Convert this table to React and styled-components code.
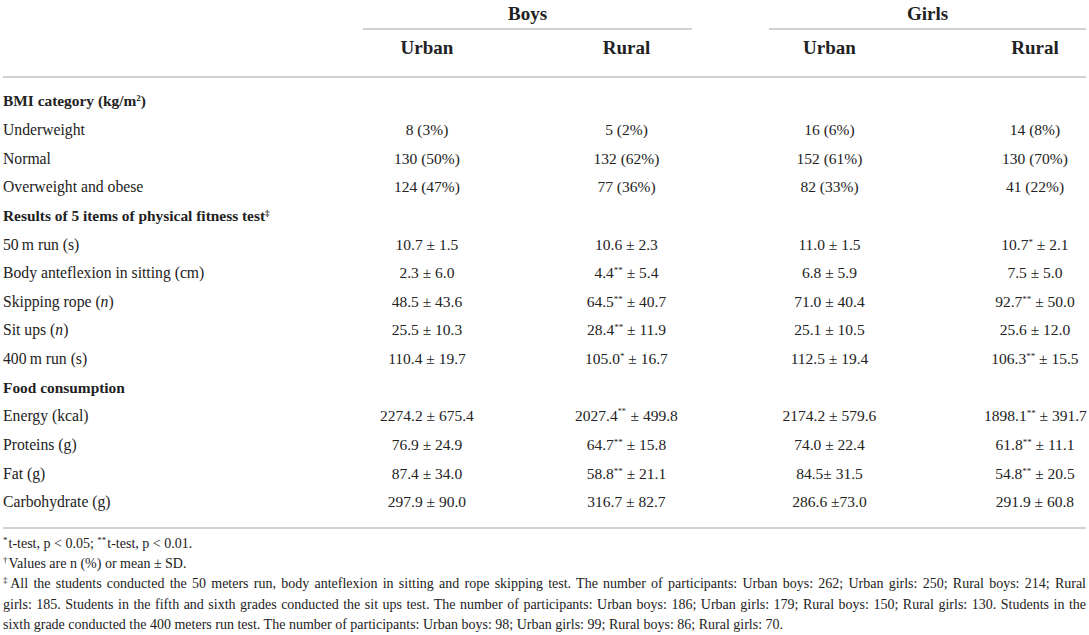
import React from 'react'
import styled, { createGlobalStyle } from 'styled-components'

const GlobalStyle = createGlobalStyle`
   html, body {
      margin: 0;
      padding: 0;
      background: #fff;
   }
   body {
      font-family: 'Liberation Serif', 'Times New Roman', serif;
      color: #222;
   }
`

const COLUMNS = '360px 128px 70px 131px 77px 121px 94px 102px'
const RULE = '2px solid #d2d2d2'

const Page = styled.div`
   width: 1083px;
   padding-left: 3px;
`

const Row = styled.div`
   display: grid;
   grid-template-columns: ${COLUMNS};
   align-items: center;
   height: ${p => p.height || 28.65}px;
   border-bottom: ${p => (p.ruled ? RULE : 'none')};
   box-sizing: border-box;
`

const GroupTitle = styled.div`
   grid-column: ${p => p.span};
   align-self: stretch;
   display: flex;
   align-items: center;
   justify-content: center;
   border-bottom: ${RULE};
   font-weight: bold;
   font-size: 19px;
   padding-bottom: 1px;
`

const SubTitle = styled.div`
   grid-column: ${p => p.col};
   text-align: center;
   font-weight: bold;
   font-size: 19px;
   align-self: start;
   padding-top: 7px;
`

const Body = styled.div`
   padding-top: 9px;
   padding-bottom: 10px;
   border-bottom: ${RULE};
`

const Label = styled.div`
   grid-column: 1;
   font-size: ${p => (p.section ? '15.4px' : '15.7px')};
   font-weight: ${p => (p.section ? 'bold' : 'normal')};
   white-space: nowrap;
`

const Value = styled.div`
   grid-column: ${p => p.col};
   text-align: center;
   font-size: 15.5px;
   white-space: nowrap;
`

const Sup = styled.sup`
   font-size: ${p => (p.tight ? '8px' : '9px')};
   vertical-align: ${p => (p.tight ? '7px' : '5px')};
   line-height: 0;
   margin-right: ${p => (p.tight ? '1px' : '0')};
`

const Notes = styled.div`
   padding-top: 5px;
   font-size: 14px;
   line-height: 20.4px;
`

const NoteLine = styled.div`
   text-align: justify;
   text-align-last: ${p => (p.last ? 'left' : 'justify')};
`

const Mark = styled.sup`
   font-size: 9px;
   vertical-align: 5px;
   line-height: 0;
   margin-right: 1px;
`

const num = (value, star, tight) => {
   const [mean, sd] = value.split('|')
   return (
      <>
         {mean}
         {star && <Sup tight={tight}>{star}</Sup>}
         {sd}
      </>
   )
}

const sections = [
   {
      title: <>BMI category (kg/m<Sup>2</Sup>)</>,
      rows: [
         ['Underweight', ['8 (3%)'], ['5 (2%)'], ['16 (6%)'], ['14 (8%)']],
         ['Normal', ['130 (50%)'], ['132 (62%)'], ['152 (61%)'], ['130 (70%)']],
         ['Overweight and obese', ['124 (47%)'], ['77 (36%)'], ['82 (33%)'], ['41 (22%)']],
      ],
   },
   {
      title: <>Results of 5 items of physical fitness test<Sup>‡</Sup></>,
      rows: [
         ['50\u2009m run (s)', ['10.7 ± 1.5'], ['10.6 ± 2.3'], ['11.0 ± 1.5'], ['10.7| ± 2.1', '*']],
         ['Body anteflexion in sitting (cm)', ['2.3 ± 6.0'], ['4.4| ± 5.4', '**'], ['6.8 ± 5.9'], ['7.5 ± 5.0']],
         [<>Skipping rope (<i>n</i>)</>, ['48.5 ± 43.6'], ['64.5| ± 40.7', '**'], ['71.0 ± 40.4'], ['92.7| ± 50.0', '**']],
         [<>Sit ups (<i>n</i>)</>, ['25.5 ± 10.3'], ['28.4| ± 11.9', '**'], ['25.1 ± 10.5'], ['25.6 ± 12.0']],
         ['400\u2009m run (s)', ['110.4 ± 19.7'], ['105.0| ± 16.7', '*'], ['112.5 ± 19.4'], ['106.3| ± 15.5', '**']],
      ],
   },
   {
      title: 'Food consumption',
      rows: [
         ['Energy (kcal)', ['2274.2 ± 675.4'], ['2027.4| ± 499.8', '**', true], ['2174.2 ± 579.6'], ['1898.1| ± 391.7', '**']],
         ['Proteins (g)', ['76.9 ± 24.9'], ['64.7| ± 15.8', '**'], ['74.0 ± 22.4'], ['61.8| ± 11.1', '**']],
         ['Fat (g)', ['87.4 ± 34.0'], ['58.8| ± 21.1', '**'], ['84.5± 31.5'], ['54.8| ± 20.5', '**']],
         ['Carbohydrate (g)', ['297.9 ± 90.0'], ['316.7 ± 82.7'], ['286.6 ±73.0'], ['291.9 ± 60.8']],
      ],
   },
]

const valueCols = [2, 4, 6, 8]

const App = () => (
   <Page>
      <GlobalStyle />
      <Row height={30}>
         <GroupTitle span='2 / 5'>Boys</GroupTitle>
         <GroupTitle span='6 / 9'>Girls</GroupTitle>
      </Row>
      <Row height={48} ruled>
         <SubTitle col={2}>Urban</SubTitle>
         <SubTitle col={4}>Rural</SubTitle>
         <SubTitle col={6}>Urban</SubTitle>
         <SubTitle col={8}>Rural</SubTitle>
      </Row>

      <Body>
         {sections.map((section, i) => (
            <React.Fragment key={i}>
               <Row>
                  <Label section>{section.title}</Label>
               </Row>
               {section.rows.map(([label, ...cells], j) => (
                  <Row key={j}>
                     <Label>{label}</Label>
                     {cells.map(([value, star, tight], k) => (
                        <Value key={k} col={valueCols[k]}>
                           {num(value, star, tight)}
                        </Value>
                     ))}
                  </Row>
               ))}
            </React.Fragment>
         ))}
      </Body>

      <Notes>
         <NoteLine last><Mark>*</Mark>t-test, p {'<'} 0.05; <Mark>**</Mark>t-test, p {'<'} 0.01.</NoteLine>
         <NoteLine last><Mark>†</Mark>Values are n (%) or mean ± SD.</NoteLine>
         <NoteLine>
            <Mark>‡</Mark>All the students conducted the 50 meters run, body anteflexion in sitting and rope skipping test. The number of participants: Urban boys: 262; Urban girls: 250; Rural boys: 214; Rural
         </NoteLine>
         <NoteLine>
            girls: 185. Students in the fifth and sixth grades conducted the sit ups test. The number of participants: Urban boys: 186; Urban girls: 179; Rural boys: 150; Rural girls: 130. Students in the
         </NoteLine>
         <NoteLine last>
            sixth grade conducted the 400 meters run test. The number of participants: Urban boys: 98; Urban girls: 99; Rural boys: 86; Rural girls: 70.
         </NoteLine>
      </Notes>
   </Page>
)

export default App
